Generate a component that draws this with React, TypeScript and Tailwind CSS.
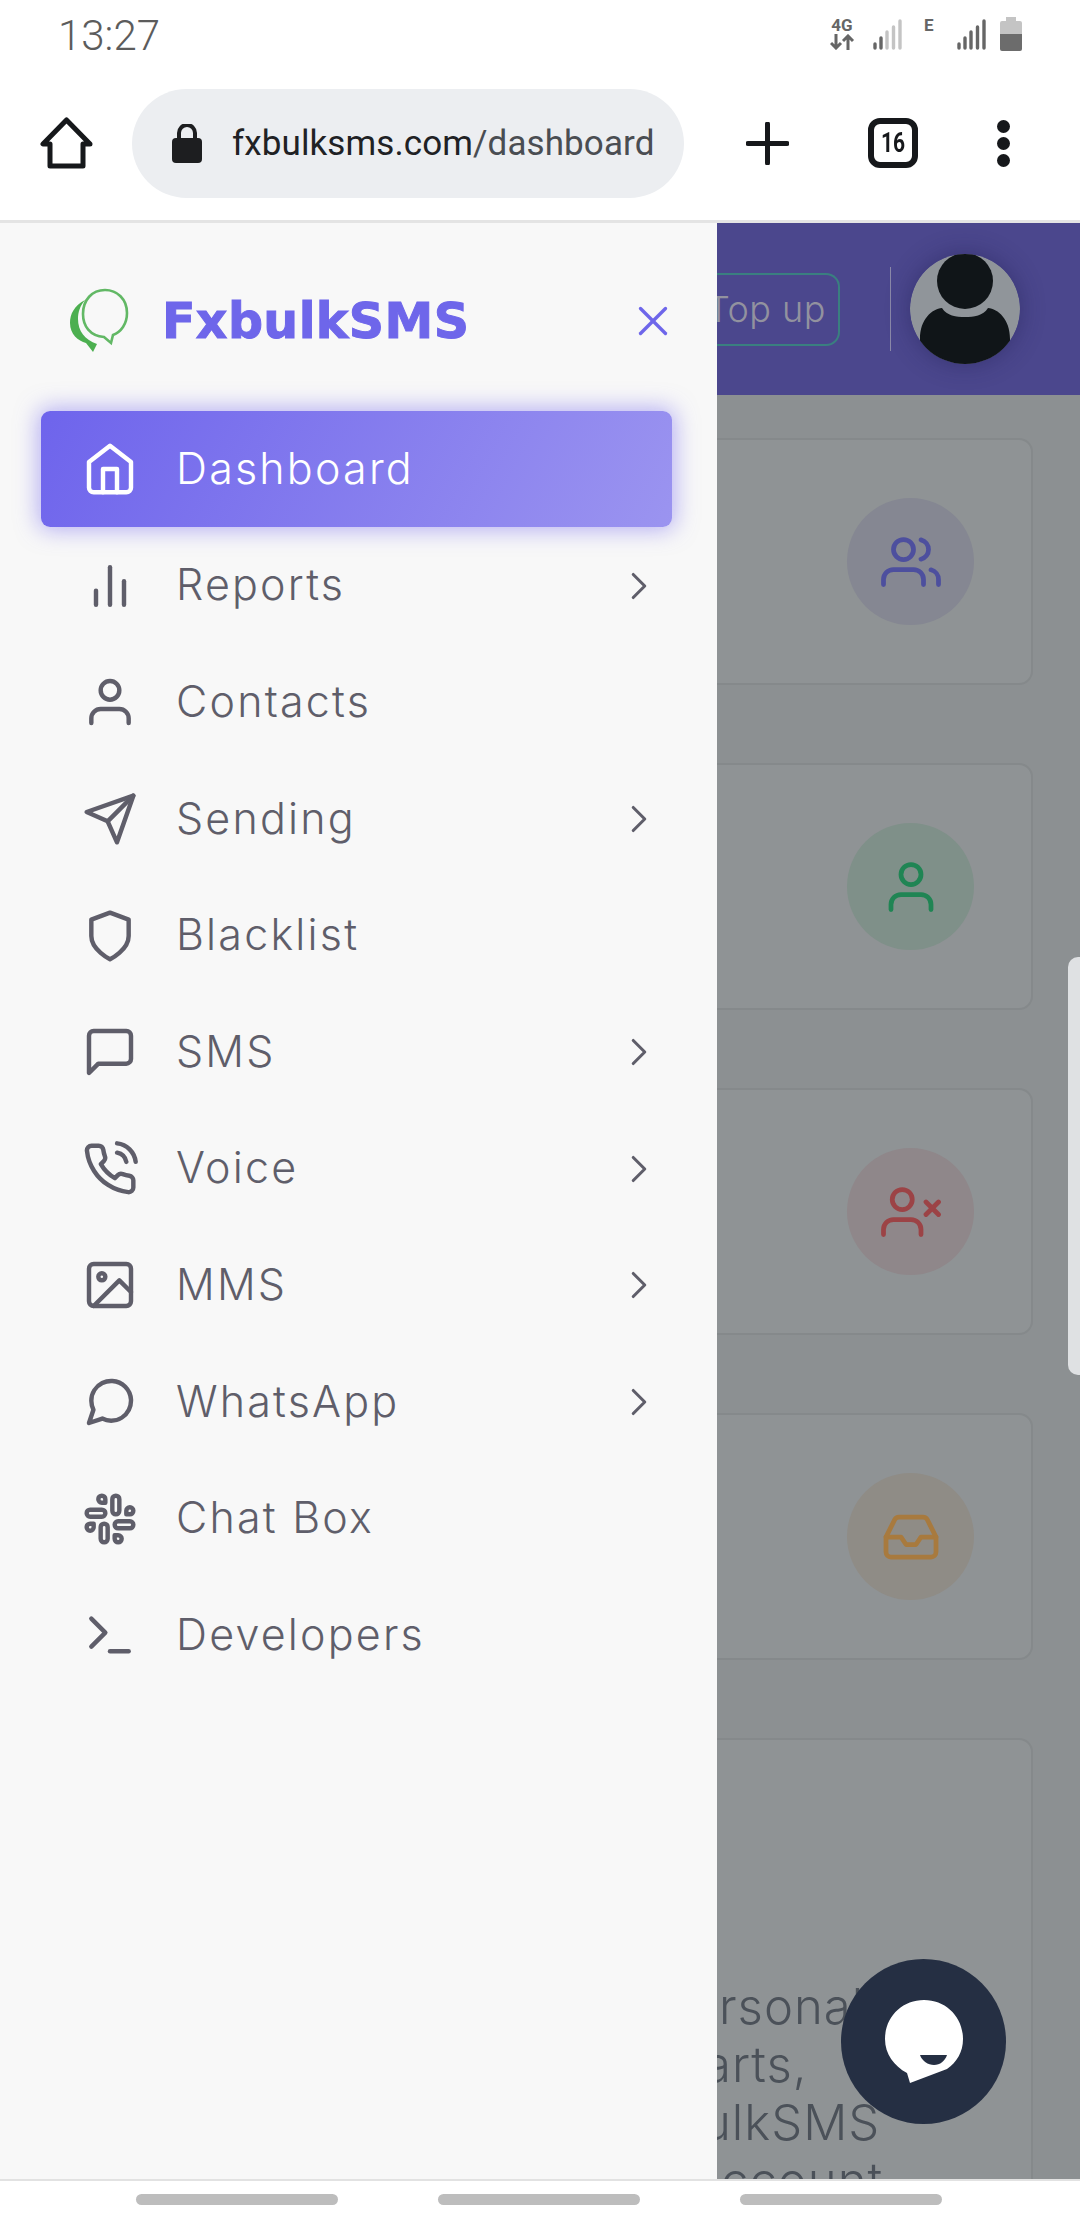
import * as React from "react";
import {
  FiBarChart2,
  FiChevronRight,
  FiHome,
  FiImage,
  FiInbox,
  FiMessageCircle,
  FiMessageSquare,
  FiPhoneCall,
  FiSend,
  FiShield,
  FiSlack,
  FiTerminal,
  FiUser,
  FiUsers,
  FiUserX,
  FiX,
} from "react-icons/fi";

const menu = [
  { label: "Dashboard", icon: FiHome, active: true },
  { label: "Reports", icon: FiBarChart2, arrow: true },
  { label: "Contacts", icon: FiUser },
  { label: "Sending", icon: FiSend, arrow: true },
  { label: "Blacklist", icon: FiShield },
  { label: "SMS", icon: FiMessageSquare, arrow: true },
  { label: "Voice", icon: FiPhoneCall, arrow: true },
  { label: "MMS", icon: FiImage, arrow: true },
  { label: "WhatsApp", icon: FiMessageCircle, arrow: true },
  { label: "Chat Box", icon: FiSlack },
  { label: "Developers", icon: FiTerminal },
];

const stats = [
  { icon: FiUsers, circle: "bg-[#858792]", color: "text-[#4d4f9e]" },
  { icon: FiUser, circle: "bg-[#7f9089]", color: "text-[#208554]" },
  { icon: FiUserX, circle: "bg-[#8f878a]", color: "text-[#9c4346]" },
  { icon: FiInbox, circle: "bg-[#8f8c86]", color: "text-[#a87a3e]" },
];

const Signal: React.FC<{ faded?: boolean }> = ({ faded }) => (
  <svg width="29" height="32" viewBox="0 0 29 32" strokeWidth="3.4" strokeLinecap="round">
    <path d="M2 29v-4" stroke="#666" />
    <path d="M8 29v-10" stroke="#666" />
    <path d="M14 29V13" stroke={faded ? "#c4c4c4" : "#666"} />
    <path d="M20.5 29V8" stroke={faded ? "#c4c4c4" : "#666"} />
    <path d="M27 29V2" stroke={faded ? "#c4c4c4" : "#666"} />
  </svg>
);

const StatusBar = () => (
  <div className="h-[60px] flex items-start justify-between pl-[58px] pr-[58px] shrink-0">
    <span className="font-['Roboto',sans-serif] font-light text-[42px] leading-[71px] text-[#5c5c5c]">13:27</span>
    <div className="flex items-start pt-[17px]">
      <div className="w-[26px] flex flex-col items-center text-[#666] font-['Roboto',sans-serif] font-bold">
        <span className="text-[17px] leading-[17px]">4G</span>
        <svg width="25" height="16" viewBox="0 0 25 16" fill="none" stroke="#666" strokeWidth="3">
          <path d="M6 0v13M1 9l5 5 5-5M18 16V3M13 7l5-5 5 5" />
        </svg>
      </div>
      <div className="ml-[18px] pt-[2px]"><Signal faded /></div>
      <span className="ml-[22px] w-[11px] text-[#666] font-['Roboto',sans-serif] font-bold text-[17px] leading-[17px]">E</span>
      <div className="ml-[22px] pt-[2px]"><Signal /></div>
      <svg className="ml-[14px]" width="22" height="34" viewBox="0 0 22 34">
        <path d="M6 0h10v4h4a2 2 0 0 1 2 2v11H0V6a2 2 0 0 1 2-2h4z" fill="#c4c4c4" />
        <path d="M0 17h22v15a2 2 0 0 1-2 2H2a2 2 0 0 1-2-2z" fill="#6c6c6c" />
      </svg>
    </div>
  </div>
);

const BrowserBar = () => (
  <div className="h-[160px] flex items-center shrink-0 pt-[6px]">
    <svg className="ml-[40px]" width="53" height="52" viewBox="0 0 53 52" fill="none" stroke="#16181b" strokeWidth="5" strokeLinejoin="round">
      <path d="M26.5 3 3 27h7v22h33V27h7z" />
    </svg>
    <div className="ml-[39px] w-[552px] h-[109px] rounded-full bg-[#eceef1] flex items-center pl-[40px]">
      <svg width="30" height="39" viewBox="0 0 30 39">
        <path d="M7 15v-6a8 8 0 0 1 16 0v6" fill="none" stroke="#1d1e20" strokeWidth="4" />
        <rect x="0" y="14" width="30" height="25" rx="4" fill="#1d1e20" />
      </svg>
      <span className="ml-[30px] font-['Roboto',sans-serif] text-[35px] leading-none tracking-[0.1px] whitespace-nowrap text-[#202124]">
        fxbulksms.com<span className="text-[#4a4d52]">/dashboard</span>
      </span>
    </div>
    <svg className="ml-[62px]" width="43" height="43" viewBox="0 0 43 43" stroke="#16181b" strokeWidth="5" strokeLinecap="round">
      <path d="M21.5 2v39M2 21.5h39" />
    </svg>
    <div className="ml-[79px] w-[50px] h-[50px] rounded-[12px] border-[6px] border-[#16181b] flex items-center justify-center font-['Roboto',sans-serif] font-bold text-[28px] leading-none text-[#16181b]">
      <span className="scale-x-[0.75]">16</span>
    </div>
    <div className="ml-[79px] flex flex-col gap-[4px]">
      <span className="w-[13px] h-[13px] rounded-full bg-[#16181b]" />
      <span className="w-[13px] h-[13px] rounded-full bg-[#16181b]" />
      <span className="w-[13px] h-[13px] rounded-full bg-[#16181b]" />
    </div>
  </div>
);

const Logo = () => (
  <svg className="blur-[0.6px] shrink-0" width="62" height="66" viewBox="0 0 62 66" fill="none">
    <path d="M17 12C6 18 2 26 2 35c0 11 8 18 16 20l7 9 4-8C17 52 10 43 10 31c0-7 2-13 7-19z" fill="#4caf50" />
    <path d="M37 2c12 0 22 9 22 23 0 11-6 19-14 22l-2 8-7-6C22 48 15 38 15 26 15 12 24 2 37 2z" stroke="#62b865" strokeWidth="2.6" />
  </svg>
);

const Sidebar = () => (
  <aside className="w-[717px] shrink-0 bg-[#f8f8f8] flex flex-col">
    <div className="h-[188px] flex items-center pl-[68px] pr-[39px] pt-[8px]">
      <Logo />
      <span className="ml-[32px] blur-[0.7px] font-['DejaVu_Sans',sans-serif] font-bold text-[49px] leading-none tracking-[0.4px] [-webkit-text-stroke:1px_#6e66ea] text-[#6e66ea]">FxbulkSMS</span>
      <FiX className="ml-auto text-[#6e66ea]" size={50} strokeWidth={1.6} />
    </div>
    <nav className="pl-[41px] pr-[45px] flex flex-col">
      {menu.map((item) => {
        const Icon = item.icon;
        return (
          <div
            key={item.label}
            className={
              item.active
                ? "h-[116px] mb-[0.6px] flex items-center pl-[41px] pr-[10px] rounded-[9px] bg-linear-[118deg] from-[#6e64ec] to-[#9b94f0] shadow-[0_0_22px_3px_rgba(115,103,240,0.5)] text-white"
                : "h-[116.6px] flex items-center pl-[41px] pr-[10px] text-[#5f5e6a]"
            }
          >
            <Icon size={56} strokeWidth={1.9} className="shrink-0" />
            <span className="ml-[38px] font-['Inter',sans-serif] font-light text-[43px] leading-none tracking-[2.2px] -translate-y-[1px]">{item.label}</span>
            {item.arrow && <FiChevronRight size={46} strokeWidth={1.6} className="ml-auto" />}
          </div>
        );
      })}
    </nav>
  </aside>
);

const Avatar = () => (
  <svg className="rounded-full shadow-[0_0_24px_rgba(30,28,80,0.45)]" width="110" height="110" viewBox="0 0 110 110">
    <circle cx="55" cy="55" r="55" fill="#90959a" />
    <ellipse cx="55" cy="27" rx="28" ry="28" fill="#101518" />
    <path d="M10 110V85c0-20 12-30 22-31 5 8 14 9 23 9s18-1 23-9c10 1 22 11 22 31v25z" fill="#101518" />
  </svg>
);

const Content = () => (
  <main className="flex-1 min-w-0 bg-[#8c9092] overflow-hidden flex flex-col">
    <header className="h-[172px] shrink-0 bg-[#4b478d] flex items-center justify-end pr-[60px]">
      <div className="w-[123px] h-[73px] rounded-r-[14px] border-2 border-l-0 border-[#3a7f80] flex items-center justify-end pr-[12px] shrink-0">
        <span className="font-['Inter',sans-serif] font-light text-[36px] leading-none text-[#92929f] whitespace-nowrap tracking-[0.5px]">Top up</span>
      </div>
      <span className="ml-[50px] w-[2px] h-[84px] bg-[#8a88a8]" />
      <span className="ml-[19px]"><Avatar /></span>
    </header>
    <div className="flex-1 min-h-0 pt-[43px] pr-[47px] flex flex-col gap-[78px]">
      {stats.map((s, i) => {
        const Icon = s.icon;
        return (
          <div key={i} className="h-[247px] shrink-0 -ml-[30px] rounded-[14px] border-2 border-[#85898b] bg-[#8f9395] flex items-center justify-end pr-[57px]">
            <div className={`w-[127px] h-[127px] rounded-full flex items-center justify-center ${s.circle}`}>
              <Icon size={60} strokeWidth={1.9} className={s.color} />
            </div>
          </div>
        );
      })}
      <div className="h-[500px] shrink-0 -ml-[30px] rounded-[14px] border-2 border-[#85898b] bg-[#8f9395] pt-[238px] pl-[30px] overflow-hidden font-['Inter',sans-serif] font-light text-[#4b5159] text-[49px] leading-[58px] tracking-[1px] whitespace-nowrap">
        <p>rsonali</p>
        <p className="-ml-[15px]">arts,</p>
        <p className="-ml-[17px]">ulkSMS</p>
        <p className="ml-[2px]">ccount</p>
      </div>
    </div>
  </main>
);

const BottomBar = () => (
  <div className="h-[41px] shrink-0 bg-white border-t-[2px] border-[#e2e2e2] flex items-start pt-[13px] pl-[136px] gap-[100px]">
    <span className="w-[202px] h-[11px] rounded-full bg-[#bdbdbd]" />
    <span className="w-[202px] h-[11px] rounded-full bg-[#bdbdbd]" />
    <span className="w-[202px] h-[11px] rounded-full bg-[#bdbdbd]" />
  </div>
);

const ChatButton = () => (
  <div className="absolute left-[841px] top-[1959px] w-[165px] h-[165px] rounded-full bg-[#252f43] flex items-center justify-center">
    <svg width="78" height="84" viewBox="0 0 78 84">
      <path d="M39 0c22 0 39 17 39 39 0 13-6 23-16 30L25 83l-3-10C9 66 0 54 0 39 0 17 17 0 39 0z" fill="#fff" />
      <path d="M35 55h27c-2 6-7 10-13 10s-12-4-14-10z" fill="#252f43" />
    </svg>
  </div>
);

export default function App() {
  return (
    <div className="relative w-[1080px] h-[2220px] overflow-hidden bg-white flex flex-col">
      <StatusBar />
      <BrowserBar />
      <div className="h-[3px] shrink-0 bg-[#e4e4e4]" />
      <div className="flex-1 min-h-0 flex">
        <Sidebar />
        <Content />
      </div>
      <BottomBar />
      <div className="absolute left-[1068px] top-[957px] w-[12px] h-[418px] rounded-l-[10px] bg-[#dfe1e3]" />
      <ChatButton />
    </div>
  );
}
